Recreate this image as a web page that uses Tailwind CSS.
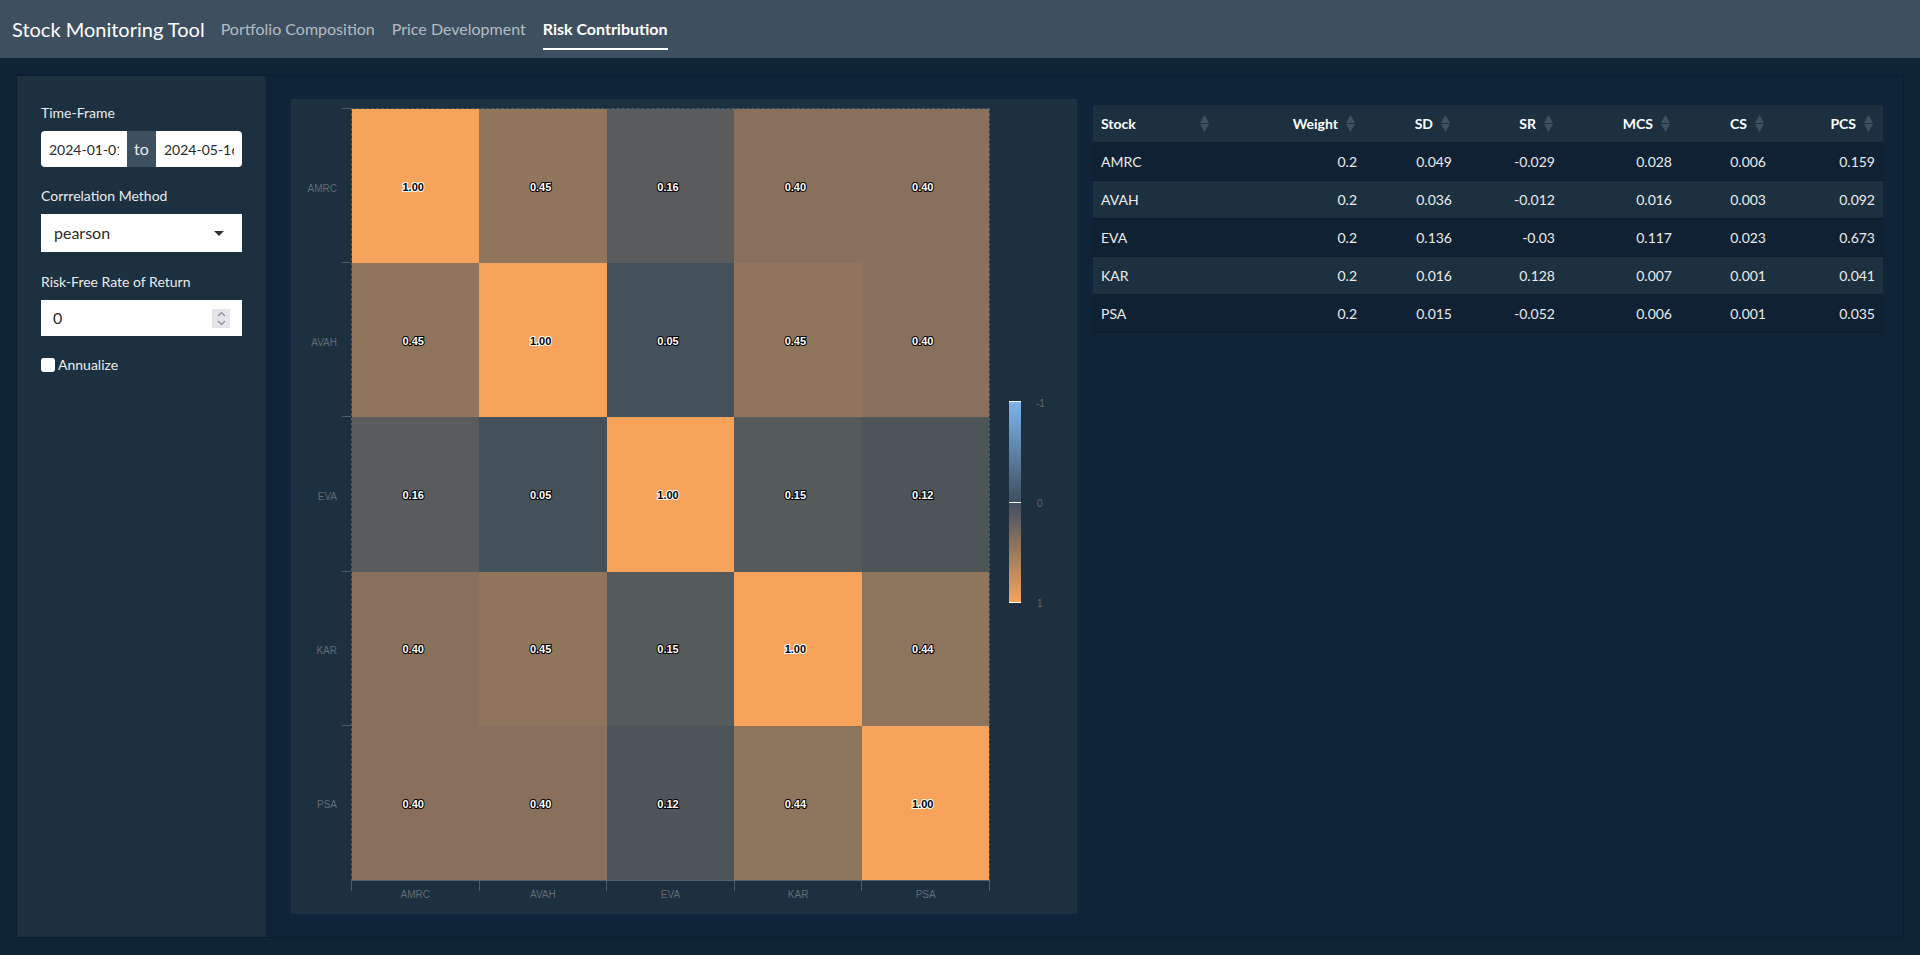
<!DOCTYPE html>
<html lang="en">
<head>
  <meta charset="UTF-8" />
  <title>Stock Monitoring Tool</title>
  <script src="https://cdn.jsdelivr.net/npm/@tailwindcss/browser@4"></script>
</head>
<body class="h-[955px] overflow-hidden bg-[#0f2537] font-['Lato',sans-serif] text-[14px] text-[#ebebeb]">

  <!-- navbar -->
  <nav class="flex h-[58px] items-stretch bg-[#3e4f5f] pl-3">
    <span class="mr-4 self-center text-[20px] text-white">Stock Monitoring Tool</span>
    <a class="mr-[17px] flex items-center text-[16px] text-[#b3bbc2]">Portfolio Composition</a>
    <a class="mr-[17px] flex items-center text-[16px] text-[#b3bbc2]">Price Development</a>
    <a class="flex h-[50px] items-center self-start border-b-2 border-white pt-[10px] text-[16px] font-bold text-white">Risk Contribution</a>
  </nav>

  <!-- card -->
  <div class="mx-[16px] mt-[17px] flex h-[863px] border border-[#0c1e2e] bg-[#0f2438]">

    <!-- sidebar -->
    <aside class="w-[249px] shrink-0 border-r border-[#1a2c3b] bg-[#1c3040] pl-[24px] pr-[23px] pt-[28px]">
      <label class="block h-[18px] leading-[18px]">Time-Frame</label>
      <div class="mt-[9px] flex h-[36px] w-[201px] overflow-hidden rounded-[4px] bg-white">
        <input value="2024-01-01" class="w-[86px] px-2 text-[14px] text-[#2a2a2a]" />
        <span class="flex w-[29px] items-center justify-center bg-[#3e4f5f] text-[16px] text-[#ebebeb]">to</span>
        <input value="2024-05-16" class="w-[86px] px-2 text-[14px] text-[#2a2a2a]" />
      </div>

      <label class="mt-[20px] block h-[18px] leading-[18px]">Corrrelation Method</label>
      <div class="mt-[9px] flex h-[38px] w-[201px] items-center justify-between bg-white pl-[13px] pr-[18px] text-[16px] text-[#2a2a2a]">
        pearson
        <svg width="10" height="5" viewBox="0 0 10 5"><path d="M0 0h10L5 5z" fill="#333" /></svg>
      </div>

      <label class="mt-[21px] block h-[18px] leading-[18px]">Risk-Free Rate of Return</label>
      <div class="mt-[9px] flex h-[36px] w-[201px] items-center justify-between bg-white pl-3 pr-3 text-[16px] text-[#2a2a2a]">
        0
        <span class="flex h-[19px] w-[18px] items-center justify-center bg-[#e4e4ea]">
          <svg width="9" height="15" viewBox="0 0 9 15" fill="none" stroke="#8a8a90" stroke-width="1.2"><path d="M1 5l3.500-3.500L8 5M1 10l3.500 3.500L8 10" /></svg>
        </span>
      </div>

      <label class="mt-[18px] flex items-center gap-[3px]">
        <span class="h-[14px] w-[14px] rounded-[3px] bg-white"></span>
        Annualize
      </label>
    </aside>

    <!-- main -->
    <main class="flex items-start gap-4 pl-[25px] pt-[23px]">

      <!-- heatmap panel -->
      <section class="flex h-[815px] w-[786px] shrink-0 bg-[#1c3040] pt-[9px] font-['Liberation_Sans',sans-serif] text-[10px] text-[#626a72]">
        <div class="mt-[3px] grid h-[771px] w-[46px] grid-rows-5 items-center text-right">
          <span>AMRC</span><span>AVAH</span><span>EVA</span><span>KAR</span><span>PSA</span>
        </div>
        <div class="ml-[5px] mt-0 grid h-[771px] w-[9px] grid-rows-5">
          <i class="border-t border-[#4c5c6b]"></i><i class="border-t border-[#4c5c6b]"></i><i class="border-t border-[#4c5c6b]"></i><i class="border-t border-[#4c5c6b]"></i><i class="border-t border-[#4c5c6b]"></i>
        </div>

        <div class="w-[639px] shrink-0">
          <div class="grid h-[773px] grid-cols-5 grid-rows-5 border-x border-t border-dashed border-x-[#4c5c6b] border-t-[#4c5c6b] border-b border-b-[#55646f] [border-bottom-style:solid] text-[11px] font-bold text-white [-webkit-text-stroke:2px_#000] [paint-order:stroke_fill]">
            <div class="flex items-center justify-center bg-[#f7a35c] pr-[5px] pt-0.5 text-black [-webkit-text-stroke:2px_#fff]">1.00</div>
            <div class="flex items-center justify-center bg-[#8f755c] pr-[5px] pt-0.5">0.45</div>
            <div class="flex items-center justify-center bg-[#5a5b5c] pr-[5px] pt-0.5">0.16</div>
            <div class="flex items-center justify-center bg-[#88705c] pr-[5px] pt-0.5">0.40</div>
            <div class="flex items-center justify-center bg-[#88705c] pr-[5px] pt-0.5">0.40</div>

            <div class="flex items-center justify-center bg-[#8f755c] pr-[5px] pt-0.5">0.45</div>
            <div class="flex items-center justify-center bg-[#f7a35c] pr-[5px] pt-0.5 text-black [-webkit-text-stroke:2px_#fff]">1.00</div>
            <div class="flex items-center justify-center bg-[#44505a] pr-[5px] pt-0.5">0.05</div>
            <div class="flex items-center justify-center bg-[#8f755c] pr-[5px] pt-0.5">0.45</div>
            <div class="flex items-center justify-center bg-[#88705c] pr-[5px] pt-0.5">0.40</div>

            <div class="flex items-center justify-center bg-[#5a5b5c] pr-[5px] pt-0.5">0.16</div>
            <div class="flex items-center justify-center bg-[#44505a] pr-[5px] pt-0.5">0.05</div>
            <div class="flex items-center justify-center bg-[#f7a35c] pr-[5px] pt-0.5 text-black [-webkit-text-stroke:2px_#fff]">1.00</div>
            <div class="flex items-center justify-center bg-[#555a5b] pr-[5px] pt-0.5">0.15</div>
            <div class="flex items-center justify-center bg-[#4d5559] pr-[5px] pt-0.5">0.12</div>

            <div class="flex items-center justify-center bg-[#88705c] pr-[5px] pt-0.5">0.40</div>
            <div class="flex items-center justify-center bg-[#8f755c] pr-[5px] pt-0.5">0.45</div>
            <div class="flex items-center justify-center bg-[#555a5b] pr-[5px] pt-0.5">0.15</div>
            <div class="flex items-center justify-center bg-[#f7a35c] pr-[5px] pt-0.5 text-black [-webkit-text-stroke:2px_#fff]">1.00</div>
            <div class="flex items-center justify-center bg-[#8d745c] pr-[5px] pt-0.5">0.44</div>

            <div class="flex items-center justify-center bg-[#88705c] pr-[5px] pt-0.5">0.40</div>
            <div class="flex items-center justify-center bg-[#88705c] pr-[5px] pt-0.5">0.40</div>
            <div class="flex items-center justify-center bg-[#4d5559] pr-[5px] pt-0.5">0.12</div>
            <div class="flex items-center justify-center bg-[#8d745c] pr-[5px] pt-0.5">0.44</div>
            <div class="flex items-center justify-center bg-[#f7a35c] pr-[5px] pt-0.5 text-black [-webkit-text-stroke:2px_#fff]">1.00</div>
          </div>
          <div class="grid grid-cols-5 border-r border-[#4c5c6b] [border-image:linear-gradient(#4c5c6b_10px,transparent_10px)_1]">
            <div class="border-l border-[#4c5c6b] [border-image:linear-gradient(#4c5c6b_10px,transparent_10px)_1] pt-[8px] text-center leading-[12px]">AMRC</div>
            <div class="border-l border-[#4c5c6b] [border-image:linear-gradient(#4c5c6b_10px,transparent_10px)_1] pt-[8px] text-center leading-[12px]">AVAH</div>
            <div class="border-l border-[#4c5c6b] [border-image:linear-gradient(#4c5c6b_10px,transparent_10px)_1] pt-[8px] text-center leading-[12px]">EVA</div>
            <div class="border-l border-[#4c5c6b] [border-image:linear-gradient(#4c5c6b_10px,transparent_10px)_1] pt-[8px] text-center leading-[12px]">KAR</div>
            <div class="border-l border-[#4c5c6b] [border-image:linear-gradient(#4c5c6b_10px,transparent_10px)_1] pt-[8px] text-center leading-[12px]">PSA</div>
          </div>
        </div>

        <!-- colour legend -->
        <div class="ml-[19px] mt-[293px] flex">
          <div class="relative h-[202px] w-3 border-y border-white bg-[linear-gradient(#7cb5ec,#3e4f5f_50%,#f7a35c)]">
            <i class="absolute inset-x-0 top-1/2 h-px bg-white"></i>
          </div>
          <div class="-mt-[2px] ml-[16px] flex h-[210px] flex-col justify-between leading-[10px]">
            <span class="-ml-px">-1</span><span>0</span><span>1</span>
          </div>
        </div>
      </section>

      <!-- stats table -->
      <table class="mt-[6px] w-[790px] shrink-0 table-fixed border-collapse">
        <colgroup>
          <col class="w-[126px]" /><col class="w-[146px]" /><col class="w-[95px]" /><col class="w-[103px]" /><col class="w-[117px]" /><col class="w-[94px]" /><col class="w-[109px]" />
        </colgroup>
        <thead>
          <tr class="h-[37px] bg-[#1c3040] font-bold text-white">
            <th class="pl-2 pr-[10px]"><div class="flex items-center justify-between">Stock<svg width="9" height="17" viewBox="0 0 9 17" fill="#41505f"><path d="M4.500 0L9 8H0zM0 9h9l-4.500 8z" /></svg></div></th>
            <th class="pr-[10px]"><div class="flex items-center justify-end gap-[8px]">Weight<svg width="9" height="17" viewBox="0 0 9 17" fill="#41505f"><path d="M4.500 0L9 8H0zM0 9h9l-4.500 8z" /></svg></div></th>
            <th class="pr-[10px]"><div class="flex items-center justify-end gap-[8px]">SD<svg width="9" height="17" viewBox="0 0 9 17" fill="#41505f"><path d="M4.500 0L9 8H0zM0 9h9l-4.500 8z" /></svg></div></th>
            <th class="pr-[10px]"><div class="flex items-center justify-end gap-[8px]">SR<svg width="9" height="17" viewBox="0 0 9 17" fill="#41505f"><path d="M4.500 0L9 8H0zM0 9h9l-4.500 8z" /></svg></div></th>
            <th class="pr-[10px]"><div class="flex items-center justify-end gap-[8px]">MCS<svg width="9" height="17" viewBox="0 0 9 17" fill="#41505f"><path d="M4.500 0L9 8H0zM0 9h9l-4.500 8z" /></svg></div></th>
            <th class="pr-[10px]"><div class="flex items-center justify-end gap-[8px]">CS<svg width="9" height="17" viewBox="0 0 9 17" fill="#41505f"><path d="M4.500 0L9 8H0zM0 9h9l-4.500 8z" /></svg></div></th>
            <th class="pr-[10px]"><div class="flex items-center justify-end gap-[8px]">PCS<svg width="9" height="17" viewBox="0 0 9 17" fill="#41505f"><path d="M4.500 0L9 8H0zM0 9h9l-4.500 8z" /></svg></div></th>
          </tr>
        </thead>
        <tbody class="text-right [&_td]:pr-2 [&_td:first-child]:pl-2 [&_td:first-child]:text-left [&_tr]:h-[38px] [&_tr]:border-t [&_tr]:border-[#0c1c2b]">
          <tr class="bg-[#0f2132]"><td>AMRC</td><td>0.2</td><td>0.049</td><td>-0.029</td><td>0.028</td><td>0.006</td><td>0.159</td></tr>
          <tr class="bg-[#1c3040]"><td>AVAH</td><td>0.2</td><td>0.036</td><td>-0.012</td><td>0.016</td><td>0.003</td><td>0.092</td></tr>
          <tr class="bg-[#0f2132]"><td>EVA</td><td>0.2</td><td>0.136</td><td>-0.03</td><td>0.117</td><td>0.023</td><td>0.673</td></tr>
          <tr class="bg-[#1c3040]"><td>KAR</td><td>0.2</td><td>0.016</td><td>0.128</td><td>0.007</td><td>0.001</td><td>0.041</td></tr>
          <tr class="border-b border-[#0c1c2b] bg-[#0f2132]"><td>PSA</td><td>0.2</td><td>0.015</td><td>-0.052</td><td>0.006</td><td>0.001</td><td>0.035</td></tr>
        </tbody>
      </table>
    </main>
  </div>
</body>
</html>
